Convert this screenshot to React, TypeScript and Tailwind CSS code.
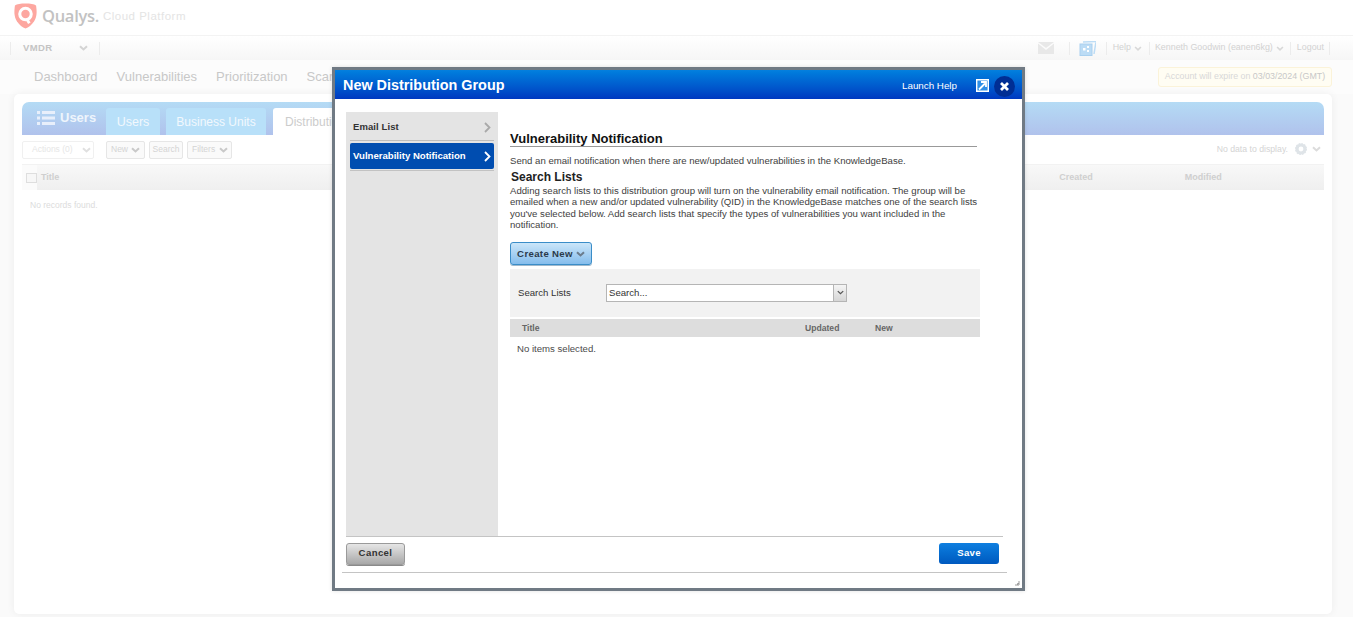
import React from "react";

const font = { fontFamily: '"Liberation Sans", Arial, sans-serif' };

function Chev({ className = "", color = "#c9c9c9", w = 9, h = 6, sw = 2 }: { className?: string; color?: string; w?: number; h?: number; sw?: number }) {
  return (
    <svg width={w} height={h} viewBox="0 0 9 6" className={className}>
      <path d="M1 1.2 L4.5 4.5 L8 1.2" fill="none" stroke={color} strokeWidth={sw} />
    </svg>
  );
}

function Logo() {
  return (
    <svg width="23" height="26" viewBox="0 0 24 27">
      <path d="M12 0.5 C17 0.5 21 1 23 2.5 C24 9 24 14 21 19 C18.5 23 15 25.5 12 26.5 C9 25.5 5.5 23 3 19 C0 14 0 9 1 2.5 C3 1 7 0.5 12 0.5 Z" fill="#fda7a0" />
      <circle cx="12" cy="11.5" r="6" fill="none" stroke="#fff" strokeWidth="3.2" />
      <path d="M13 16 L16 21" stroke="#fff" strokeWidth="3" />
    </svg>
  );
}

function Sep() {
  return <div className="h-[13px] w-px bg-[#ececec]" />;
}

function Background() {
  return (
    <div className="flex h-[617px] w-[1353px] flex-col overflow-hidden bg-[#fafafa]" style={font}>
      <div className="flex h-[36px] items-center border-b border-[#f3f3f3] bg-white pb-[4px] pl-[14px]">
        <Logo />
        <span className="ml-[5px] mt-[1px] text-[16.5px] font-semibold tracking-[-0.3px] text-[#c2c2c2]" style={{ fontFamily: '"Open Sans", sans-serif' }}>Qualys.</span>
        <span className="ml-[4px] mt-[3px] text-[11.5px] tracking-[0.5px] text-[#e4e4e4]">Cloud Platform</span>
      </div>
      <div className="flex h-[24px] items-center bg-gradient-to-b from-white to-[#f6f6f6]">
        <div className="ml-[10px] flex h-[13px] w-[90px] items-center border-x border-[#ececec] pl-[12px]">
          <span className="text-[9.5px] font-bold tracking-[0.4px] text-[#c4c4c4]">VMDR</span>
          <Chev className="ml-[26px]" color="#d4d4d4" />
        </div>
        <div className="ml-auto flex items-center text-[8.9px] text-[#d2d2d2]">
          <svg width="16" height="12" viewBox="0 0 16 12" className="mr-[15px]">
            <path d="M0 0 H16 L8 6 Z" fill="#e8e8e8" />
            <path d="M0 1.5 L8 8 L16 1.5 V12 H0 Z" fill="#e8e8e8" />
          </svg>
          <Sep />
          <svg width="17" height="15" viewBox="0 0 17 15" className="ml-[9px] mr-[10px]">
            <path d="M4 1 L17 0.5 L15 13" fill="none" stroke="#bcdcf5" strokeWidth="1.5" />
            <rect x="1" y="3" width="12" height="11.5" fill="#bcdcf5" stroke="#a9d0ef" />
            <rect x="4" y="7" width="2.5" height="2.5" fill="#fff" />
            <rect x="8" y="5" width="2" height="2" fill="#fff" />
            <rect x="8" y="9" width="2" height="2" fill="#fff" />
          </svg>
          <Sep />
          <span className="ml-[6px]">Help</span>
          <Chev className="ml-[3px] mr-[7px]" color="#d8d8d8" w={8} h={5} />
          <Sep />
          <span className="ml-[5px]">Kenneth Goodwin (eanen6kg)</span>
          <Chev className="ml-[3px] mr-[6px]" color="#d8d8d8" w={8} h={5} />
          <Sep />
          <span className="ml-[6px] mr-[5px]">Logout</span>
          <Sep />
          <div className="w-[23px]" />
        </div>
      </div>
      <div className="flex h-[34px] items-center justify-between bg-[#fcfcfc] pl-[34px] pr-[21px]">
        <div className="flex gap-[19px] text-[13px] text-[#c8c8c8]">
          <span>Dashboard</span>
          <span>Vulnerabilities</span>
          <span>Prioritization</span>
          <span>Scans</span>
        </div>
        <div className="flex h-[20px] w-[174px] items-center justify-center whitespace-nowrap rounded-[3px] border border-[#fbf3d9] bg-[#fffdf3] text-[8.85px] text-[#d8d8d8]">
          <span>Account will expire on <span className="text-[#c8c8c8]">03/03/2024 (GMT)</span></span>
        </div>
      </div>
      <div className="ml-[14px] mr-[21px] flex h-[520px] flex-col rounded-[5px] bg-white px-[8px] pt-[8px] shadow-[0_0_8px_rgba(0,0,0,0.06)]">
        <div className="flex h-[33px] items-end rounded-t-[7px] bg-gradient-to-b from-[#b4dbf5] to-[#b0c2ec]">
          <div className="flex w-[84px] items-center self-center pb-[2px] pl-[15px]">
            <svg width="18" height="16" viewBox="0 0 18 16" fill="#e8effb">
              <rect x="0" y="1" width="3" height="3" />
              <rect x="0" y="6.5" width="3" height="3" />
              <rect x="0" y="12" width="3" height="3" />
              <rect x="5" y="1" width="13" height="3" />
              <rect x="5" y="6.5" width="13" height="3" />
              <rect x="5" y="12" width="13" height="3" />
            </svg>
            <span className="ml-[5px] text-[13px] font-bold text-[#eef5fc]">Users</span>
          </div>
          <div className="flex h-[27px] w-[54px] items-center justify-center rounded-t-[3px] bg-[#b8e0f9] pt-[1px] text-[12.5px] text-[#f2f8fd]">Users</div>
          <div className="ml-[6px] flex h-[27px] w-[100px] items-center justify-center rounded-t-[3px] bg-[#b8e0f9] text-[12px] text-[#f2f8fd]">Business Units</div>
          <div className="ml-[7px] flex h-[27px] w-[120px] items-center rounded-t-[3px] bg-white pl-[12px] text-[12px] text-[#cccccc]">Distribution Groups</div>
        </div>
        <div className="flex h-[29px] items-center text-[8.5px] text-[#d4d4d4]">
          <div className="flex h-[18px] w-[72px] items-center rounded-[2px] border border-[#f0f0f0] pl-[9px] text-[#e6e6e6]">Actions (0)<Chev className="ml-[9px]" color="#e0e0e0" /></div>
          <div className="ml-[12px] flex h-[18px] w-[39px] items-center rounded-[2px] border border-[#e6e6e6] bg-[#fafafa] pl-[4px]">New<Chev className="ml-[3px]" /></div>
          <div className="ml-[4px] flex h-[18px] w-[34px] items-center justify-center rounded-[2px] border border-[#e6e6e6] bg-[#fafafa]">Search</div>
          <div className="ml-[4px] flex h-[18px] w-[45px] items-center rounded-[2px] border border-[#e6e6e6] bg-[#fafafa] pl-[4px]">Filters<Chev className="ml-[4px]" /></div>
          <div className="ml-auto flex items-center pr-[3px] text-[8.7px]">
            No data to display.
            <svg width="12" height="12" viewBox="0 0 12 12" className="ml-[7px]">
              <circle cx="6" cy="6" r="4" fill="none" stroke="#dfe4e8" strokeWidth="3.2" />
              <circle cx="6" cy="6" r="5.4" fill="none" stroke="#dfe4e8" strokeWidth="1.2" strokeDasharray="1.6 1.2" />
            </svg>
            <Chev className="ml-[5px]" color="#dcdcdc" />
          </div>
        </div>
        <div className="flex h-[26px] items-center border-t border-[#f2f2f2] bg-gradient-to-b from-[#f8f8f8] to-[#efefef] text-[9px] font-bold text-[#cfcfcf]">
          <div className="flex h-full w-[15px] items-center justify-center bg-[#fbfbfb]">
            <div className="ml-[3px] h-[10px] w-[11px] border border-[#dedede] bg-[#f7f7f7]" />
          </div>
          <span className="ml-[4px]">Title</span>
          <span className="ml-[1000px]">Created</span>
          <span className="ml-[92px]">Modified</span>
        </div>
        <div className="ml-[8px] mt-[9px] text-[8.5px] text-[#dcdcdc]">No records found.</div>
      </div>
    </div>
  );
}

function Modal() {
  return (
    <div className="absolute left-[332px] top-[67px] flex h-[524px] w-[693px] flex-col border-[3px] border-[#707a84] bg-white shadow-[0_0_4px_rgba(0,0,0,0.12)]" style={font}>
      <div className="flex h-[29px] shrink-0 items-center bg-gradient-to-b from-[#0580de] to-[#0038c0] pl-[8px] pr-[7px]">
        <span className="mt-[2px] text-[14.4px] font-bold text-white">New Distribution Group</span>
        <span className="ml-auto mt-[3px] text-[9.8px] text-white">Launch Help</span>
        <svg width="13" height="13" viewBox="0 0 13 13" className="ml-[19px] mt-[2px]">
          <path d="M0.7 0.7 H12.3 V12.3 H0.7 Z" fill="#2f8fe6" stroke="#fff" strokeWidth="1.4" />
          <path d="M3 10.5 L9 4.5 M5 3 H10 V8" fill="none" stroke="#fff" strokeWidth="1.8" />
        </svg>
        <div className="ml-[5px] mt-[3px] flex h-[21px] w-[21px] items-center justify-center rounded-full bg-[#002e94]">
          <svg width="9" height="9" viewBox="0 0 9 9"><path d="M1 1 L8 8 M8 1 L1 8" stroke="#fff" strokeWidth="2.8" /></svg>
        </div>
      </div>
      <div className="flex min-h-0 flex-1 flex-col pl-[11px] pt-[13px]">
        <div className="flex h-[425px] w-[657px] shrink-0 border-b border-[#c4c4c4]">
          <div className="w-[152px] shrink-0 bg-[#e4e4e4] px-[4px] pt-[1px]">
            <div className="flex h-[28px] items-center justify-between border-b border-[#bcbcbc] pl-[3px] pr-[3px] pt-[1px] text-[9.5px] font-bold tracking-[0.1px] text-[#333333]">
              Email List
              <svg width="7" height="11" viewBox="0 0 7 11"><path d="M1 1 L5.5 5.5 L1 10" fill="none" stroke="#a9a9a9" strokeWidth="1.8" /></svg>
            </div>
            <div className="mt-[2px] flex h-[26px] items-center justify-between rounded-[2px] bg-[#004db0] pl-[3px] pr-[3px] text-[9.6px] font-bold text-white">
              Vulnerability Notification
              <svg width="7" height="11" viewBox="0 0 7 11"><path d="M1 1 L5.5 5.5 L1 10" fill="none" stroke="#ffffff" strokeWidth="1.8" /></svg>
            </div>
            <div className="mt-[1px] border-t border-[#c2c2c2]" />
          </div>
          <div className="min-w-0 flex-1 pl-[12px] pt-[20px] text-[9.6px] leading-[11px] text-[#444444]">
            <div className="w-[467px] border-b border-[#999999] pb-[1px] text-[13px] font-bold leading-[13px] text-[#111111]">Vulnerability Notification</div>
            <p className="mt-[8px] text-[9.6px] leading-[11px] text-[#3e3e3e]">Send an email notification when there are new/updated vulnerabilities in the KnowledgeBase.</p>
            <h3 className="ml-[1px] mt-[4px] text-[12px] font-bold leading-[14px] text-[#222222]">Search Lists</h3>
            <p className="mt-[1px] w-[472px] text-[9.6px] leading-[11.3px] text-[#3e3e3e]">
              Adding search lists to this distribution group will turn on the vulnerability email notification. The group will be emailed when a new and/or updated vulnerability (QID) in the KnowledgeBase matches one of the search lists you've selected below. Add search lists that specify the types of vulnerabilities you want included in the notification.
            </p>
            <div className="mt-[12px] flex h-[23px] w-[82px] items-center justify-center rounded-[3px] border border-[#3a8dc8] bg-gradient-to-b from-[#cbe6f9] to-[#85bdec] text-[9.6px] font-bold tracking-[0.35px] text-[#2b3a4a] shadow-[0_1px_0_#9fb8cc]">
              Create New
              <Chev className="ml-[3px]" color="#6b7c8c" />
            </div>
            <div className="mt-[4px] flex h-[48px] w-[470px] items-center bg-[#f2f2f2] pb-[1px]">
              <span className="ml-[8px] w-[88px] text-[9.6px] text-[#333333]">Search Lists</span>
              <div className="flex h-[18px] w-[241px] items-center border border-[#b5b5b5] bg-white">
                <span className="ml-[2px] flex-1 text-[9.6px] text-[#333333]">Search...</span>
                <div className="flex h-full w-[13px] items-center justify-center border-l border-[#b5b5b5] bg-gradient-to-b from-[#f5f5f5] to-[#d6d6d6]">
                  <Chev color="#555555" w={7} h={5} sw={1.6} />
                </div>
              </div>
            </div>
            <div className="mt-[2px] flex h-[18px] w-[470px] items-center bg-[#dddddd] text-[8.6px] font-bold text-[#666666]">
              <span className="ml-[12px] w-[283px]">Title</span>
              <span className="w-[70px]">Updated</span>
              <span>New</span>
            </div>
            <p className="ml-[7px] mt-[6px] text-[9.6px] text-[#4b4b4b]">No items selected.</p>
          </div>
        </div>
        <div className="-ml-[4px] flex h-[36px] w-[665px] shrink-0 items-center justify-between border-b border-[#c4c4c4] pb-[2px] pl-[4px] pr-[8px]">
          <div className="flex h-[22px] w-[59px] items-center justify-center rounded-[3px] border border-[#9a9a9a] bg-gradient-to-b from-[#e6e6e6] to-[#a8a8a8] text-[9.6px] font-bold tracking-[0.4px] text-[#333333] shadow-[0_1px_0_#8a8a8a]">Cancel</div>
          <div className="flex h-[21px] w-[60px] items-center justify-center rounded-[3px] bg-gradient-to-b from-[#0f7fe0] to-[#0059bf] text-[9.6px] font-bold tracking-[0.3px] text-white">Save</div>
        </div>
      </div>
      <svg width="6" height="6" viewBox="0 0 6 6" className="absolute bottom-[2px] right-[2px]">
        <path d="M5 1 V5 H1 M5 3.5 H3.5 V5" fill="none" stroke="#9a9a9a" strokeWidth="1" />
      </svg>
    </div>
  );
}

export default function App() {
  return (
    <div className="relative h-[617px] w-[1353px] overflow-hidden">
      <Background />
      <Modal />
    </div>
  );
}
